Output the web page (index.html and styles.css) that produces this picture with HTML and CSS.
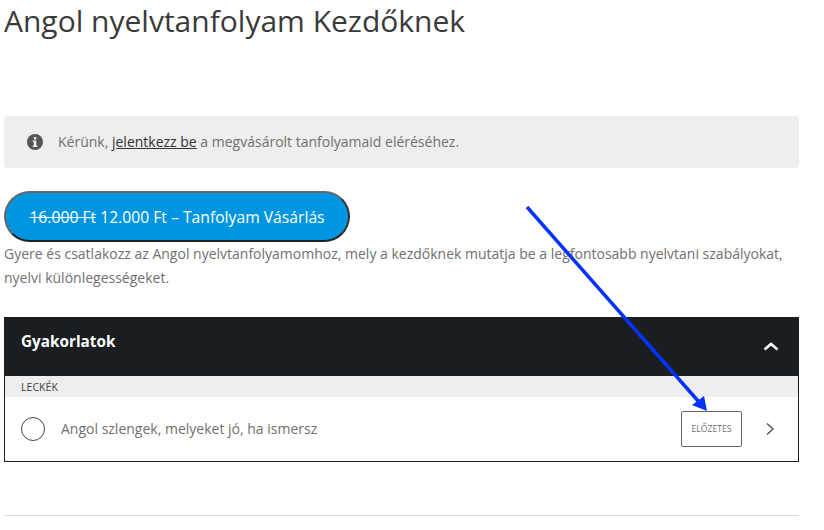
FILE: index.html
```html
<!DOCTYPE html>
<html lang="hu">
<head>
<meta charset="utf-8">
<title>Angol nyelvtanfolyam Kezdőknek</title>
<link rel="stylesheet" href="styles.css">
</head>
<body>
<main class="page">
  <h1 class="title">Angol nyelvtanfolyam Kezdőknek</h1>
  <div class="notice">
    <svg class="info" viewBox="0 0 16 16" width="16" height="16"><circle cx="8" cy="8" r="8" fill="#555"/><rect x="6.900" y="3" width="2.400" height="2.400" rx=".5" fill="#eee"/><path d="M5.800 6.600h3.500v5h1v1.400H5.800v-1.400h1v-3.600h-1z" fill="#eee"/></svg>
    <span class="notice-text">Kérünk, <a class="link" href="#">jelentkezz be</a> a megvásárolt tanfolyamaid eléréséhez.</span>
  </div>
  <button class="buy"><s>16.000 Ft</s> 12.000 Ft – Tanfolyam Vásárlás</button>
  <p class="desc">Gyere és csatlakozz az Angol nyelvtanfolyamomhoz, mely a kezdőknek mutatja be a legfontosabb nyelvtani szabályokat, nyelvi különlegességeket.</p>
  <section class="course">
    <header class="course-head">
      <span class="course-title">Gyakorlatok</span>
      <svg class="up" viewBox="0 0 16 10" width="16" height="10"><path d="M1.500 8.500 8 3l6.500 5.500" fill="none" stroke="#fff" stroke-width="2.600"/></svg>
    </header>
    <div class="subhead">LECKÉK</div>
    <div class="lesson">
      <span class="radio"></span>
      <span class="lesson-name">Angol szlengek, melyeket jó, ha ismersz</span>
      <span class="preview">ELŐZETES</span>
      <svg class="next" viewBox="0 0 10 16" width="10" height="16"><path d="M2 2.500 8 8l-6 5.500" fill="none" stroke="#555" stroke-width="1.500"/></svg>
    </div>
  </section>
  <hr class="rule">
</main>
<svg class="arrow" width="824" height="530" viewBox="0 0 824 530"><path d="M527 207 699 402" stroke="#0433ff" stroke-width="3.500" fill="none"/><path d="M707 411 692 405 704 396z" fill="#0433ff"/></svg>
</body>
</html>
```

FILE: styles.css
```css
* { box-sizing: border-box; }
html, body { margin: 0; padding: 0; background: #fff; }
body {
  width: 824px;
  height: 530px;
  overflow: hidden;
  position: relative;
  font-family: "Open Sans", sans-serif;
  color: #666;
}
.page { width: 795px; margin-left: 4px; display: flex; flex-direction: column; }
.title {
  margin: 0;
  height: 116px;
  padding-top: 2px;
  font-size: 30px;
  line-height: 38px;
  font-weight: 400;
  color: #3a3a3a;
}
.notice {
  height: 52px;
  background: #eee;
  border-radius: 4px;
  display: flex;
  align-items: center;
  gap: 15px;
  padding-left: 23px;
  font-size: 14px;
  color: #707070;
}
.notice-text { margin-top: -1px; }
.info { flex: none; }
.link { color: #333; text-decoration: underline; }
.buy {
  margin-top: 23px;
  width: 346px;
  height: 51px;
  border-radius: 26px;
  border: 2px solid;
  border-color: #666 #333 #222 #666;
  background: #0095e0;
  color: #fff;
  font-family: inherit;
  font-size: 15.700px;
  padding: 0;
  text-align: center;
}
.desc {
  margin: 0;
  font-size: 14px;
  line-height: 24px;
  color: #707070;
}
.course {
  margin-top: 27px;
  border: 1px solid #1a1e21;
  border-top: 0;
  display: flex;
  flex-direction: column;
}
.course-head {
  height: 59px;
  background: #1a1e21;
  display: flex;
  justify-content: space-between;
  align-items: center;
  margin: 0 -1px;
  padding: 0 20px 0 17px;
}
.course-title {
  color: #fff;
  font-weight: 700;
  font-size: 15.300px;
  position: relative;
  top: -6px;
}
.up { margin-top: -2px; }
.subhead {
  height: 21px;
  background: #eee;
  font-size: 10.600px;
  font-weight: 400;
  line-height: 23px;
  padding-left: 16px;
  color: #444;
}
.lesson {
  height: 64px;
  display: flex;
  align-items: center;
  padding: 0 23px 0 16px;
  font-size: 14px;
  color: #707070;
}
.radio {
  width: 24px;
  height: 24px;
  border: 1px solid #444;
  border-radius: 50%;
  flex: none;
}
.lesson-name { margin-left: 16px; flex: 1; margin-top: -2px; }
.preview {
  width: 61px;
  height: 36px;
  border: 1px solid #666;
  border-radius: 2px;
  font-size: 8.600px;
  display: flex;
  align-items: center;
  justify-content: center;
}
.next { margin-left: 23px; }
.rule {
  margin: 53px 0 0;
  border: 0;
  border-top: 1px solid #ddd;
}
.arrow { position: absolute; left: 0; top: 0; pointer-events: none; }
```
